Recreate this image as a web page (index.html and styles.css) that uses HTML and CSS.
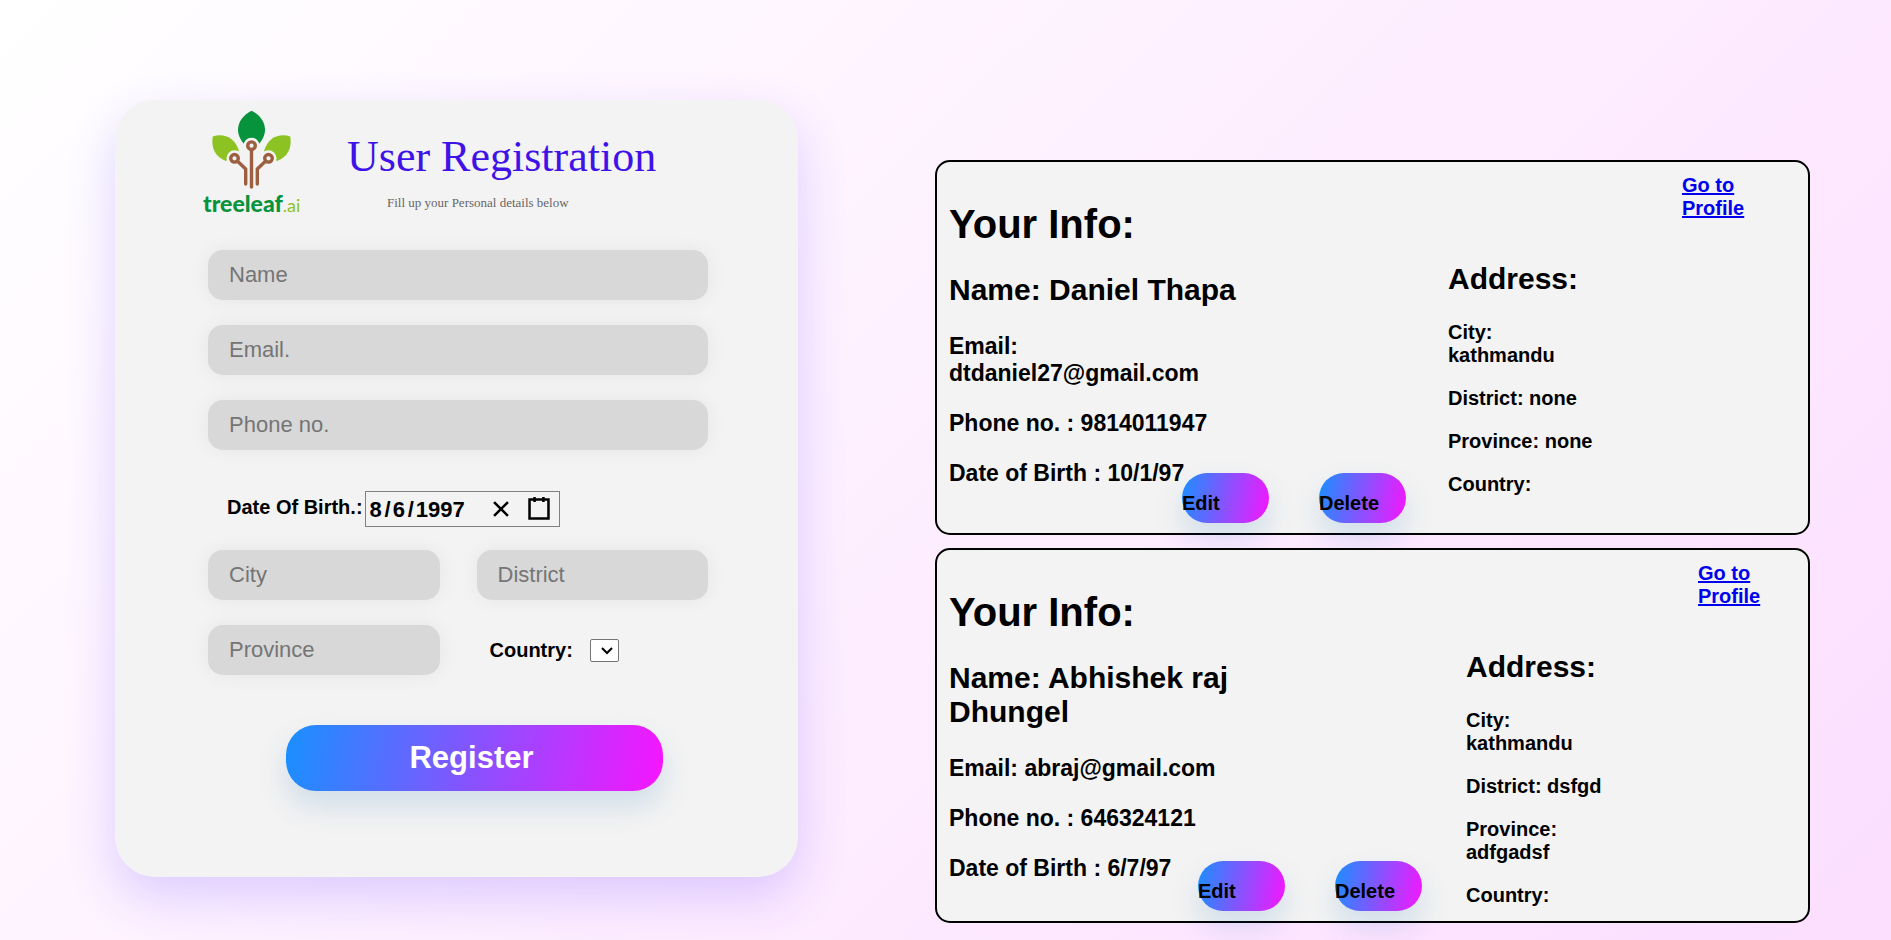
FILE: index.html
```html
<!DOCTYPE html>
<html lang="en">
<head>
<meta charset="utf-8">
<meta name="viewport" content="width=device-width, initial-scale=1">
<title>User Registration</title>
<link rel="stylesheet" href="styles.css">
</head>
<body>
<main class="page">
  <section class="register">
    <header class="register-head">
      <svg class="logo" viewBox="0 0 100 110" role="img" aria-label="treeleaf.ai">
        <path fill="#8cc322" d="M9.700 26.500C20 23 32 27 36 41L23 51C12 47 8 38 9.700 26.500Z"/>
        <path fill="#8cc322" d="M87.300 26.500C77 23 65 27 61 41L74 51C85 47 89 38 87.300 26.500Z"/>
        <path fill="#07923c" d="M48.500 .7C57 5 62 12 62 20C62 25 59 31 55 35H42C38 31 35 25 35 20C35 12 40 5 48.500 .7Z"/>
        <g fill="#f3f3f3">
          <circle cx="48.500" cy="35.700" r="8"/>
          <circle cx="31.500" cy="48.300" r="8"/>
          <circle cx="65.500" cy="48.300" r="8"/>
        </g>
        <g fill="none" stroke="#9c6040" stroke-width="3.400">
          <circle cx="48.500" cy="35.700" r="3.800"/>
          <circle cx="31.500" cy="48.300" r="3.800"/>
          <circle cx="65.500" cy="48.300" r="3.800"/>
          <g stroke-linecap="round" stroke-linejoin="round">
            <path d="M48.500 40V77"/>
            <path d="M34.800 51.500L42.700 59V74"/>
            <path d="M62.200 51.500L54.300 59V74"/>
          </g>
        </g>
        <text class="logo-name" x="0" y="102">treeleaf<tspan class="logo-tld">.ai</tspan></text>
      </svg>
      <div class="register-titles">
        <h1 class="register-title">User Registration</h1>
        <p class="register-sub">Fill up your Personal details below</p>
      </div>
    </header>

    <form class="form">
      <input class="field" type="text" placeholder="Name" aria-label="Name">
      <input class="field" type="email" placeholder="Email." aria-label="Email">
      <input class="field" type="tel" placeholder="Phone no." aria-label="Phone number">

      <div class="birth">
        <label class="birth-label" for="month">Date Of Birth.:</label>
        <div class="date">
          <input class="date-part" id="month" type="text" value="8" aria-label="Month"><span class="date-sep">/</span><input class="date-part" type="text" value="6" aria-label="Day"><span class="date-sep">/</span><input class="date-part date-year" type="text" value="1997" aria-label="Year">
          <button class="date-btn" type="button" aria-label="Clear">
            <svg width="24" height="24" viewBox="0 0 19 19" fill="none" stroke="#000" stroke-width="2"><path d="M4 4L15 15M15 4L4 15"/></svg>
          </button>
          <button class="date-btn" type="button" aria-label="Open calendar">
            <svg width="24" height="24" viewBox="0 0 19 19" fill="none" stroke="#000" stroke-width="2"><path d="M2 2H17V17H2ZM6 0V4M13 0V4"/></svg>
          </button>
        </div>
      </div>

      <div class="pair">
        <input class="field" type="text" placeholder="City" aria-label="City">
        <input class="field" type="text" placeholder="District" aria-label="District">
        <input class="field" type="text" placeholder="Province" aria-label="Province">
        <div class="country">
          <label for="country">Country:</label>
          <span class="select-wrap">
            <select class="select" id="country"><option></option></select>
            <svg class="select-arrow" width="12" height="8" viewBox="0 0 12 8" fill="none" stroke="#000" stroke-width="2"><path d="M1 1L6 6L11 1"/></svg>
          </span>
        </div>
      </div>

      <button class="submit" type="submit">Register</button>
    </form>
  </section>

  <section class="cards">
    <article class="card">
      <div class="info">
        <h1>Your Info:</h1>
        <h2>Name: Daniel Thapa</h2>
        <h3>Email: dtdaniel27@gmail.com</h3>
        <h3>Phone no. : 9814011947</h3>
        <h3>Date of Birth : 10/1/97</h3>
      </div>
      <div class="actions">
        <button class="pill" type="button">Edit</button>
        <button class="pill" type="button">Delete</button>
      </div>
      <div class="address">
        <h2>Address:</h2>
        <h4>City: kathmandu</h4>
        <h4>District: none</h4>
        <h4>Province: none</h4>
        <h4>Country:</h4>
      </div>
      <a class="profile" href="#daniel">Go to Profile</a>
    </article>

    <article class="card card-wide">
      <div class="info">
        <h1>Your Info:</h1>
        <h2>Name: Abhishek raj Dhungel</h2>
        <h3>Email: abraj@gmail.com</h3>
        <h3>Phone no. : 646324121</h3>
        <h3>Date of Birth : 6/7/97</h3>
      </div>
      <div class="actions">
        <button class="pill" type="button">Edit</button>
        <button class="pill" type="button">Delete</button>
      </div>
      <div class="address">
        <h2>Address:</h2>
        <h4>City: kathmandu</h4>
        <h4>District: dsfgd</h4>
        <h4>Province: adfgadsf</h4>
        <h4>Country:</h4>
      </div>
      <a class="profile" href="#abhishek">Go to Profile</a>
    </article>
  </section>
</main>
</body>
</html>
```

FILE: styles.css
```css
* {
  box-sizing: border-box;
}

body {
  margin: 0;
  min-height: 100vh;
  background: linear-gradient(135deg, #ffffff 0%, #fcdeff 100%);
  color: #000;
  font: bold 20px/23px "Liberation Sans", Arial, sans-serif;
}

h1, h2, h3, h4, p {
  margin: 0;
}

.page {
  display: grid;
  grid-template-columns: minmax(0, 683fr) minmax(0, 875fr);
  gap: 137px;
  align-items: start;
  padding: 100px 81px 0 115px;
}

/* Registration form */

.register {
  padding: 10px 88px 86px;
  border-radius: 40px;
  background: #f3f3f3;
  box-shadow: 0 20px 50px rgba(90, 50, 255, 0.2);
}

.register-head {
  display: flex;
  gap: 44px;
}

.logo {
  flex: none;
  width: 100px;
  height: 110px;
}

.logo-name {
  font: 900 23px Lato, sans-serif;
  fill: #07923c;
}

.logo-tld {
  font-weight: 400;
  font-size: 18px;
  fill: #8cc322;
}

.register-titles {
  padding-top: 21px;
  font-family: "Liberation Serif", "Times New Roman", serif;
}

.register-title {
  color: #3f12e8;
  font-size: 44px;
  font-weight: 400;
  line-height: 51px;
}

.register-sub {
  margin-top: 13px;
  padding-left: 40px;
  color: #666;
  font-size: 13px;
  font-weight: 400;
  line-height: 15px;
}

.form {
  display: grid;
  gap: 25px;
  padding: 30px 2px 0 5px;
}

.field {
  width: 100%;
  height: 50px;
  padding: 0 21px;
  border: 0;
  border-radius: 15px;
  background: #d8d8d8;
  box-shadow: 0 0 20px rgba(0, 0, 0, 0.06);
  font: 22px "Liberation Sans", Arial, sans-serif;
}

.field::placeholder {
  color: #757575;
}

.birth {
  display: flex;
  align-items: center;
  gap: 2px;
  margin-bottom: -2px;
  padding: 16px 0 0 19px;
}

.birth-label {
  padding-bottom: 4px;
}

.date {
  display: flex;
  align-items: center;
  height: 36px;
  padding: 0 1px 0 3px;
  border: 1px solid #808080;
  font-size: 22px;
}

.date-part {
  width: 15px;
  padding: 0 1px;
  border: 0;
  background: none;
  font: inherit;
}

.date-year {
  width: 67px;
}

.date-sep {
  padding: 0 1px;
}

.date-btn {
  display: flex;
  padding: 4px 7px;
  border: 0;
  background: none;
}

.pair {
  display: grid;
  grid-template-columns: 1fr 1fr;
  gap: 25px 37px;
}

.country {
  display: flex;
  align-items: center;
  gap: 17px;
  padding-left: 13px;
}

.select-wrap {
  position: relative;
  display: flex;
}

.select {
  width: 29px;
  height: 23px;
  border: 1px solid #767676;
  border-radius: 2px;
  background: #fff;
  appearance: none;
}

.select-arrow {
  position: absolute;
  top: 8px;
  right: 6px;
  pointer-events: none;
}

.submit,
.pill {
  border: 0;
  background: linear-gradient(100deg, #1890ff 0%, #f715ff 100%);
  box-shadow: 0 15px 30px rgba(0, 100, 180, 0.15);
}

.submit {
  height: 66px;
  margin: 25px 45px 0 78px;
  padding: 0 6px 0 0;
  border-radius: 30px;
  color: #fff;
  font: bold 31px "Liberation Sans", Arial, sans-serif;
}

/* Saved people */

.cards {
  display: grid;
  grid-auto-rows: 1fr;
  gap: 13px;
  padding-top: 60px;
}

.card {
  display: grid;
  grid-template-columns: minmax(0, 233fr) minmax(0, 266fr) minmax(0, 234fr) minmax(0, 114fr);
  padding: 12px 12px 10px;
  border: 2px solid #000;
  border-radius: 15px;
  background: #f3f3f3;
}

.card-wide {
  grid-template-columns: minmax(0, 249fr) minmax(0, 268fr) minmax(0, 232fr) minmax(0, 98fr);
}

.info {
  grid-area: 1 / 1 / 2 / 3;
  max-width: 300px;
  padding-top: 27px;
}

.card h1 {
  font-size: 40px;
  line-height: 46px;
}

.card h2 {
  font-size: 30px;
  line-height: 34px;
}

.info h2 {
  margin: 26px 0;
}

.card h3 {
  font-size: 23px;
  line-height: 27px;
}

.info h3 + h3 {
  margin-top: 23px;
}

.actions {
  grid-area: 1 / 2 / 2 / 3;
  align-self: end;
  display: flex;
  gap: 50px;
}

.pill {
  width: 87px;
  padding: 19px 0 8px;
  border-radius: 25px;
  color: #000;
  font: inherit;
  text-align: left;
}

.address {
  grid-area: 1 / 3 / 2 / 4;
  max-width: 150px;
  padding: 88px 0 4px;
}

.address h2 {
  margin-bottom: 25px;
}

.card h4 {
  font-size: 20px;
}

.address h4 + h4 {
  margin-top: 20px;
}

.profile {
  grid-area: 1 / 4 / 2 / 5;
  justify-self: start;
  align-self: start;
  max-width: 80px;
  color: #0000ee;
}
```
